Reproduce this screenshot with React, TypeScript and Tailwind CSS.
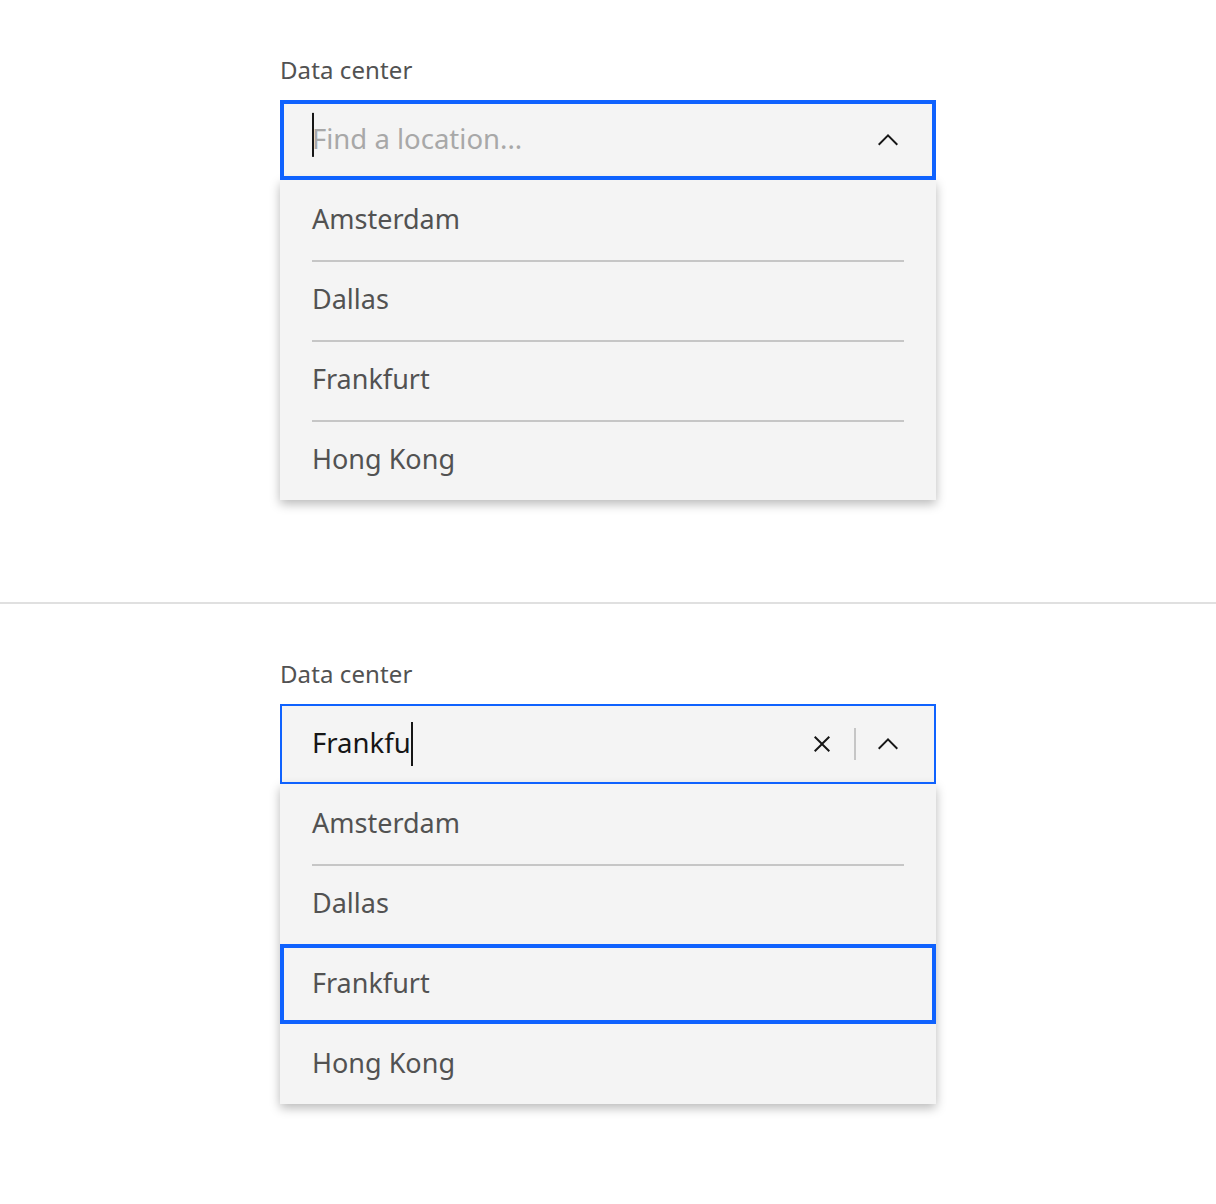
const font = { fontFamily: '"Noto Sans", "Open Sans", sans-serif' };

const cities = ["Amsterdam", "Dallas", "Frankfurt", "Hong Kong"];

function ChevronUp() {
  return (
    <svg width="32" height="32" viewBox="0 0 16 16" fill="#161616">
      <path d="M8 5 13 10 12.3 10.7 8 6.4 3.7 10.7 3 10z" />
    </svg>
  );
}

function Close() {
  return (
    <svg width="32" height="32" viewBox="0 0 16 16" fill="#161616">
      <path d="M12 4.7 11.3 4 8 7.3 4.7 4 4 4.7 7.3 8 4 11.3 4.7 12 8 8.7 11.3 12 12 11.3 8.7 8z" />
    </svg>
  );
}

function Caret() {
  return <span className="inline-block h-[44px] w-[2px] bg-[#161616]" />;
}

type ComboProps = {
  value: string;
  highlighted?: string;
};

function ComboBox({ value, highlighted }: ComboProps) {
  const hIndex = highlighted ? cities.indexOf(highlighted) : -1;

  return (
    <div className="w-[656px]">
      <label className="block h-[32px] pt-[2px] text-[24px] leading-[32px] tracking-[0.1px] text-[#525252]">
        Data center
      </label>

      <div
        className={
          value
            ? "mt-[16px] flex h-[80px] items-center bg-[#f4f4f4] px-[32px] outline-2 -outline-offset-2 outline-[#0f62fe]"
            : "mt-[16px] flex h-[80px] items-center bg-[#f4f4f4] px-[32px] outline-4 -outline-offset-4 outline-[#0f62fe]"
        }
      >
        <div className="relative flex flex-1 items-center text-[27.5px]">
          {value ? (
            <>
              <span className="pb-[2px] text-[#161616]">{value}</span>
              <Caret />
            </>
          ) : (
            <>
              <span className="pb-[2px] text-[#a8a8a8]">Find a location...</span>
              <span className="absolute left-0 top-1/2 -translate-y-1/2">
                <Caret />
              </span>
            </>
          )}
        </div>
        {value && (
          <>
            <span className="flex h-[32px] w-[32px] items-center justify-center">
              <Close />
            </span>
            <span className="ml-[16px] h-[32px] w-[2px] bg-[#c6c6c6]" />
          </>
        )}
        <span className="ml-[16px] flex h-[32px] w-[32px] items-center justify-center">
          <ChevronUp />
        </span>
      </div>

      <ul className="bg-[#f4f4f4] shadow-[0_4px_10px_rgba(0,0,0,0.28)]">
        {cities.map((city, i) => {
          const active = i === hIndex;
          const showLine = i > 0 && i !== hIndex && i - 1 !== hIndex;
          return (
            <li
              key={city}
              className={
                active
                  ? "relative h-[80px] px-[32px] outline-4 -outline-offset-4 outline-[#0f62fe]"
                  : "relative h-[80px] px-[32px]"
              }
            >
              <div
                className={
                  showLine
                    ? "flex h-full items-center border-t-2 border-[#c6c6c6] pb-[4px] text-[27px] text-[#525252]"
                    : "flex h-full items-center border-t-2 border-transparent pb-[4px] text-[27px] text-[#525252]"
                }
              >
                {city}
              </div>
            </li>
          );
        })}
      </ul>
    </div>
  );
}

export default function App() {
  return (
    <div className="min-h-[1204px] w-full bg-white" style={font}>
      <section className="flex h-[602px] justify-center pt-[52px]">
        <ComboBox value="" />
      </section>
      <div className="h-[2px] bg-[#e0e0e0]" />
      <section className="flex h-[600px] justify-center pt-[52px]">
        <ComboBox value="Frankfu" highlighted="Frankfurt" />
      </section>
    </div>
  );
}
